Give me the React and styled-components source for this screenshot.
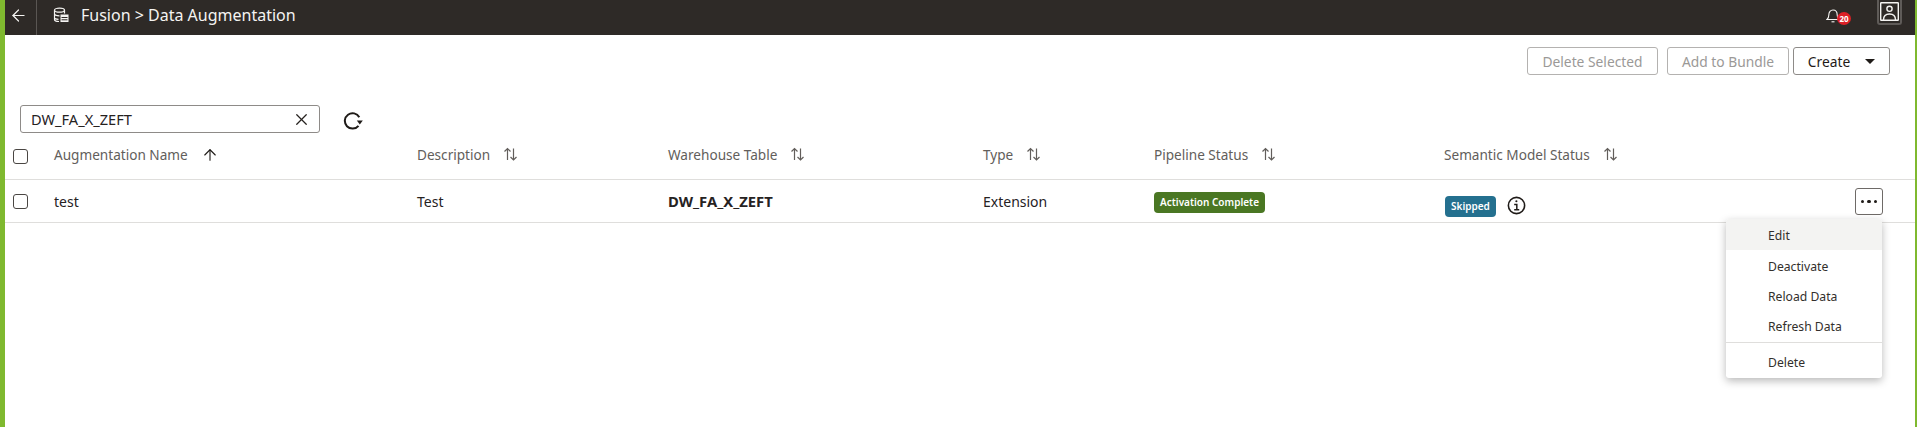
import React from 'react';
import styled, { createGlobalStyle } from 'styled-components';
import { ArrowLeft, ArrowUp, X } from 'lucide-react';

const GlobalStyle = createGlobalStyle`
  html, body { margin: 0; padding: 0; background: #fff; overflow: hidden; }
  body { font-family: "Noto Sans", "Open Sans", sans-serif; color: #26221f; }
`;

const Page = styled.div`
  position: relative;
  box-sizing: border-box;
  width: 1917px;
  height: 427px;
  border-left: 5px solid #7fb92f;
  border-right: 2px solid #7fb92f;
  display: flex;
  flex-direction: column;
`;

const Header = styled.header`
  box-sizing: border-box;
  height: 35px;
  flex: none;
  background: #2e2a27;
  color: #f5f4f2;
  display: flex;
  align-items: center;
`;

const BackCell = styled.div`
  width: 32px;
  height: 100%;
  box-sizing: border-box;
  border-right: 1px solid #5a5653;
  display: flex;
  align-items: center;
  padding: 0 0 5px 4px;
`;

const DbIcon = styled.svg`
  width: 16px;
  height: 16px;
  margin: 0 0 5px 16px;
  flex: none;
`;

const Title = styled.div`
  margin: 0 0 5px 12px;
  font-size: 16px;
  white-space: nowrap;
`;

const HeaderRight = styled.div`
  margin-left: auto;
  margin-right: 13px;
  height: 100%;
  display: flex;
  align-items: flex-start;
`;

const BellWrap = styled.div`
  position: relative;
  width: 14px;
  margin-top: 6px;
  margin-right: 37px;
`;

const Badge = styled.span`
  position: absolute;
  left: 11px;
  top: 6px;
  width: 14px;
  height: 13px;
  border-radius: 50%;
  background: #dc2026;
  color: #fff;
  font-size: 8px;
  font-weight: 700;
  line-height: 13px;
  text-align: center;
`;

const Avatar = styled.div`
  box-sizing: border-box;
  width: 25px;
  height: 25px;
  border: 2px solid #5f5b58;
  border-top: none;
  border-radius: 0 0 3px 3px;
  display: flex;
  align-items: center;
  justify-content: center;
`;

const Toolbar = styled.div`
  display: flex;
  justify-content: flex-end;
  height: 28px;
  padding: 12px 25px 0 0;
`;

const ActionButton = styled.button`
  box-sizing: border-box;
  height: 28px;
  width: ${({ $w }) => $w}px;
  margin-left: ${({ $gap }) => $gap}px;
  background: #fff;
  border: 1px solid ${({ disabled }) => (disabled ? '#b4b2b0' : '#8e8b88')};
  border-radius: 3px;
  color: ${({ disabled }) => (disabled ? '#9b9997' : '#1f1b18')};
  font-family: inherit;
  font-size: 13.8px;
  padding: 0;
  display: flex;
  align-items: center;
  justify-content: center;
  gap: 15px;
`;

const Caret = styled.span`
  width: 0;
  height: 0;
  border-left: 5px solid transparent;
  border-right: 5px solid transparent;
  border-top: 5px solid #1f1b18;
`;

const SearchRow = styled.div`
  display: flex;
  align-items: center;
  height: 28px;
  margin-top: 30px;
  padding-left: 15px;
`;

const SearchBox = styled.div`
  box-sizing: border-box;
  width: 300px;
  height: 28px;
  border: 1px solid #8e8b88;
  border-radius: 3px;
  display: flex;
  align-items: center;
  justify-content: space-between;
  padding: 0 8px 0 10px;
  font-size: 14.6px;
`;

const RefreshButton = styled.svg`
  width: 20px;
  height: 18px;
  margin: 4px 0 0 23px;
`;

const Row = styled.div`
  display: grid;
  grid-template-columns: 41px 363px 251px 315px 171px 290px 1fr;
  align-items: center;
  box-sizing: border-box;
  height: ${({ $h }) => $h}px;
  padding-left: 8px;
  border-bottom: 1px solid #dfdedc;
`;

const Check = styled.span`
  box-sizing: border-box;
  width: 15px;
  height: 15px;
  border: 1.5px solid #4a4643;
  border-radius: 3px;
`;

const HeadCell = styled.div`
  display: flex;
  align-items: center;
  gap: 13px;
  font-size: 13.6px;
  color: #625e5b;
  white-space: nowrap;
  padding-bottom: 3px;
`;

const Cell = styled.div`
  font-size: ${({ $bold }) => ($bold ? 14.8 : 14)}px;
  font-weight: ${({ $bold }) => ($bold ? 700 : 400)};
  white-space: nowrap;
  display: flex;
  align-items: center;
`;

const Pill = styled.span`
  background: ${({ $color }) => $color};
  color: #fff;
  font-size: 10px;
  font-weight: 600;
  height: 21px;
  line-height: 21px;
  padding: 0 6px;
  border-radius: 4px;
  margin-left: ${({ $left }) => $left || 0}px;
  margin-top: ${({ $top }) => $top || 0}px;
`;

const InfoIcon = styled.svg`
  width: 19px;
  height: 19px;
  margin: 8px 0 0 11px;
`;

const MoreButton = styled.div`
  box-sizing: border-box;
  position: absolute;
  left: 1850px;
  top: 188px;
  width: 28px;
  height: 27px;
  border: 1px solid #6e6a67;
  border-radius: 3px;
  display: flex;
  align-items: center;
  justify-content: center;
  gap: 3px;
`;

const Dot = styled.i`
  width: 3.5px;
  height: 3.5px;
  border-radius: 50%;
  background: #1f1b18;
`;

const Menu = styled.div`
  position: absolute;
  left: 1721px;
  top: 219px;
  width: 156px;
  height: 159px;
  background: #fff;
  border-radius: 3px;
  overflow: hidden;
  box-shadow: 0 3px 9px rgba(0, 0, 0, 0.28);
`;

const MenuItem = styled.div`
  box-sizing: border-box;
  height: ${({ $h }) => $h || 30}px;
  line-height: 30px;
  padding: 2px 0 0 42px;
  font-size: 12.2px;
  color: #332f2c;
  background: ${({ $active }) => ($active ? '#f3f3f2' : '#fff')};
`;

const MenuDivider = styled.div`
  height: 1px;
  margin: 2px 0 3px;
  background: #dfdedc;
`;

const SortIcon = () => (
  <svg width="15" height="15" viewBox="0 0 15 15" fill="none" stroke="#625e5b" strokeWidth="1.2">
    <path d="M4.5 13V1.5M1.5 4.5l3-3 3 3M10.5 1.5V13M7.5 10l3 3 3-3" />
  </svg>
);

const columns = ['Description', 'Warehouse Table', 'Type', 'Pipeline Status', 'Semantic Model Status'];
const menuItems = ['Deactivate', 'Reload Data', 'Refresh Data'];

export default function App() {
  return (
    <>
      <GlobalStyle />
      <Page>
        <Header>
          <BackCell>
            <ArrowLeft size={19} strokeWidth={1.5} />
          </BackCell>
          <DbIcon viewBox="0 0 16 16" fill="none" stroke="#f5f4f2" strokeWidth="1.2">
            <ellipse cx="6.5" cy="3.2" rx="5" ry="2" />
            <path d="M1.5 3.2v9.3c0 1 2 2 4.5 2M11.5 3.2v3.3M1.5 6.8c0 1 2 2 5 2M1.5 10.5c0 1 2 1.7 4 1.9" />
            <rect x="7.5" y="7.5" width="8" height="7.5" fill="#f5f4f2" stroke="none" />
            <path d="M8.5 10.5h6M8.5 12.8h6" stroke="#2e2a27" strokeWidth="1" />
          </DbIcon>
          <Title>Fusion &gt; Data Augmentation</Title>
          <HeaderRight>
            <BellWrap>
              <svg width="14" height="15" viewBox="0 0 14 15" fill="none" stroke="#f5f4f2" strokeWidth="1.1">
                <path d="M1 11.5c1.3-1 1.8-2 1.8-4.5 0-3 1.7-5 4.2-5s4.2 2 4.2 5c0 2.500.5 3.500 1.800 4.500z" />
                <path d="M5.500 13.800h3" />
              </svg>
              <Badge>20</Badge>
            </BellWrap>
            <Avatar>
              <svg width="19" height="19" viewBox="0 0 19 19" fill="none" stroke="#f5f4f2" strokeWidth="1.4">
                <rect x="0.700" y="0.700" width="17.600" height="17.600" rx="0.500" />
                <circle cx="9.500" cy="6.800" r="2.600" />
                <path d="M3.500 18c0-4 2.500-6 6-6s6 2 6 6" />
              </svg>
            </Avatar>
          </HeaderRight>
        </Header>

        <Toolbar>
          <ActionButton disabled $w={131}>Delete Selected</ActionButton>
          <ActionButton disabled $w={122} $gap={9}>Add to Bundle</ActionButton>
          <ActionButton $w={97} $gap={4}>
            Create
            <Caret />
          </ActionButton>
        </Toolbar>

        <SearchRow>
          <SearchBox>
            DW_FA_X_ZEFT
            <X size={19} strokeWidth={1.6} />
          </SearchBox>
          <RefreshButton viewBox="0 0 20 18" fill="none">
            <path d="M16.300 5.200A7.700 7.700 0 1 0 15.500 13.800" stroke="#1f1b18" strokeWidth="2" />
            <path d="M13.800 8.500h6l-3 4z" fill="#1f1b18" />
          </RefreshButton>
        </SearchRow>

        <Row $h={47}>
          <Check />
          <HeadCell>
            Augmentation Name
            <ArrowUp size={18} strokeWidth={1.5} color="#1f1b18" />
          </HeadCell>
          {columns.map((c) => (
            <HeadCell key={c}>
              {c}
              <SortIcon />
            </HeadCell>
          ))}
        </Row>

        <Row $h={43}>
          <Check />
          <Cell>test</Cell>
          <Cell>Test</Cell>
          <Cell $bold>DW_FA_X_ZEFT</Cell>
          <Cell>Extension</Cell>
          <Cell>
            <Pill $color="#4a7723" $top={2}>Activation Complete</Pill>
          </Cell>
          <Cell>
            <Pill $color="#24708f" $top={10} $left={1}>Skipped</Pill>
            <InfoIcon viewBox="0 0 18 18" fill="none" stroke="#1f1b18">
              <circle cx="9" cy="9" r="7.700" strokeWidth="1.500" />
              <path d="M6.800 8h2.500v5M6.800 13h4.800" strokeWidth="1.400" />
              <circle cx="8.900" cy="5" r="1" fill="#1f1b18" stroke="none" />
            </InfoIcon>
          </Cell>
        </Row>

        <MoreButton>
          <Dot />
          <Dot />
          <Dot />
        </MoreButton>

        <Menu>
          <MenuItem $active $h={31}>Edit</MenuItem>
          {menuItems.map((m) => (
            <MenuItem key={m}>{m}</MenuItem>
          ))}
          <MenuDivider />
          <MenuItem>Delete</MenuItem>
        </Menu>
      </Page>
    </>
  );
}
